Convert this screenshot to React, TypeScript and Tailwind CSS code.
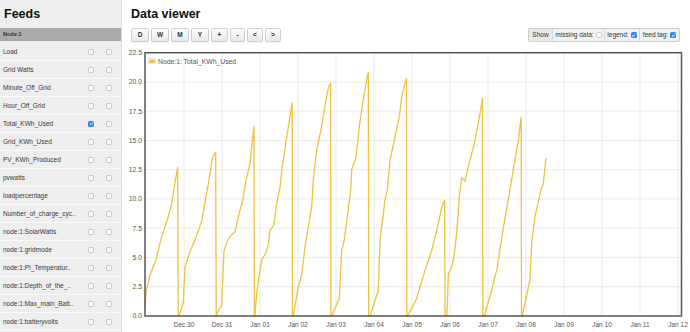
import React from 'react'

const feeds = [
  { name: 'Load' },
  { name: 'Grid Watts' },
  { name: 'Minute_Off_Grid' },
  { name: 'Hour_Off_Grid' },
  { name: 'Total_KWh_Used', left: true },
  { name: 'Grid_KWh_Used' },
  { name: 'PV_KWh_Produced' },
  { name: 'pvwatts' },
  { name: 'loadpercentage' },
  { name: 'Number_of_charge_cyc..' },
  { name: 'node:1:SolarWatts' },
  { name: 'node:1:gridmode' },
  { name: 'node:1:PI_Temperatur..' },
  { name: 'node:1:Depth_of_the_..' },
  { name: 'node:1:Max_main_Batt..' },
  { name: 'node:1:batteryvolts' },
]

const buttons = [
  { label: 'D', w: 'w-[18px]' },
  { label: 'W', w: 'w-[18px]' },
  { label: 'M', w: 'w-[18px]' },
  { label: 'Y', w: 'w-[18px]' },
  { label: '+', w: 'w-[17px]' },
  { label: '-', w: 'w-[15px]' },
  { label: '<', w: 'w-[16px]' },
  { label: '>', w: 'w-[16px]' },
]

// points as [page x, kWh]
const series: [number, number][] = [
  [145, 0.85], [146, 2.0], [150, 3.5], [156, 4.8], [161.7, 6.8], [168, 8.4], [171.7, 9.6], [175, 11.4], [177.7, 12.7], [178.2, 0],
  [180, 0.2], [183.3, 1.2], [185, 4.2], [190, 5.5], [195, 6.5], [201.7, 8.1], [208.3, 11.3], [210, 12.2], [212.7, 13.6], [215.7, 14.0], [216.2, 0],
  [218, 0.4], [221.7, 0.94], [224, 5.6], [228.3, 6.6], [231, 6.9], [235, 7.2], [238.3, 8.5], [242.7, 9.9], [246, 11.6], [250, 13.0], [251.7, 14.5], [254, 16.2], [254.4, 0],
  [255, 0.1], [256.7, 1.9], [260, 3.9], [261.7, 4.8], [266, 5.4], [268.3, 6.1], [270, 7.3], [274, 7.8], [276.7, 9.6], [280, 11.0], [282.3, 12.8], [286.7, 15.3], [292.2, 18.2], [292.5, 0],
  [293.3, 0], [298.3, 2.5], [301.7, 3.5], [305, 5.9], [311.7, 9.3], [313.3, 11.6], [316.7, 14.2], [321.7, 16.2], [326, 18.5], [328.3, 19.5], [330.6, 19.9], [330.9, 0],
  [331.7, 0], [339.3, 1.5], [341.7, 5.6], [344.3, 6.5], [350.7, 10.8], [351.7, 12.5], [356, 13.6], [359.3, 16.2], [363.3, 18.5], [366.7, 20.2], [368.3, 20.8], [368.7, 0],
  [370, 0], [378.3, 2.2], [380, 6.5], [385, 9.9], [387.3, 10.8], [390, 13.3], [395, 15.3], [399.3, 17.0], [401.7, 18.7], [405, 19.9], [406.5, 20.3], [406.8, 0],
  [407.7, 0], [416.7, 1.5], [420, 2.5], [425, 3.9], [431.7, 5.6], [438.3, 7.9], [441.7, 9.3], [444.7, 9.9], [445, 0],
  [446.7, 0], [447.3, 0.8], [448.3, 3.6], [451.7, 4.2], [454, 5.1], [456.7, 7.1], [459.3, 10.2], [461.7, 11.8], [465, 11.5], [466.7, 12.2], [470, 13.3], [475, 15.0], [480, 17.3], [482.5, 18.6], [482.8, 0],
  [484.3, 0], [491.7, 2.2], [495, 3.4], [496.7, 3.9], [503.3, 7.5], [510, 10.8], [513.3, 12.5], [518.3, 15.0], [521.2, 17.0], [521.5, 0],
  [522.3, 0], [530, 3.1], [531.7, 6.2], [535, 8.5], [541, 10.8], [543.3, 11.3], [546, 13.5],
]

const plot = { left: 145, right: 681.5, top: 52.7, bottom: 316 }
const yOf = (v: number) => plot.bottom - (v / 22.5) * (plot.bottom - plot.top)

const days = ['Dec 30', 'Dec 31', 'Jan 01', 'Jan 02', 'Jan 03', 'Jan 04', 'Jan 05', 'Jan 06', 'Jan 07', 'Jan 08', 'Jan 09', 'Jan 10', 'Jan 11', 'Jan 12']
const ticks = [0, 2.5, 5, 7.5, 10, 12.5, 15, 17.5, 20, 22.5]

function Check({ on }: { on?: boolean }) {
  if (on) {
    return (
      <span className="w-[6px] h-[6px] rounded-[1.5px] bg-[#3b87f0] flex items-center justify-center">
        <svg width="5" height="5" viewBox="0 0 10 10">
          <path d="M2 5.2 L4.2 7.3 L8 2.8" fill="none" stroke="#fff" strokeWidth="1.8" />
        </svg>
      </span>
    )
  }
  return <span className="w-[6px] h-[6px] rounded-[1.5px] border border-[#c4c4c4] bg-white" />
}

function Chart() {
  const path = series.map(([x, v], i) => `${i ? 'L' : 'M'}${x} ${yOf(v).toFixed(1)}`).join(' ')
  return (
    <svg width="568" height="290" viewBox="122 42 568 290" className="block">
      {ticks.slice(1, -1).map((t) => (
        <line key={t} x1={plot.left} x2={plot.right} y1={yOf(t)} y2={yOf(t)} stroke="#ebebeb" strokeWidth="1" />
      ))}
      {days.map((d, i) => (
        <line key={d} x1={184 + 38 * i} x2={184 + 38 * i} y1={plot.top} y2={plot.bottom} stroke="#ebebeb" strokeWidth="1" />
      ))}
      <path d={path} fill="none" stroke="#edc240" strokeWidth="1.3" strokeLinejoin="round" />
      <rect x={plot.left} y={plot.top} width={plot.right - plot.left} height={plot.bottom - plot.top} fill="none" stroke="#555" strokeWidth="1.5" />
      {ticks.map((t) => (
        <text key={t} x="142" y={yOf(t) + 2.4} textAnchor="end" fontSize="6.8" fill="#545454" fontFamily="'Liberation Sans', Arial, sans-serif">
          {t.toFixed(1)}
        </text>
      ))}
      {days.map((d, i) => (
        <text key={d} x={184 + 38 * i} y="326.5" textAnchor="middle" fontSize="6.5" fill="#545454" fontFamily="'Liberation Sans', Arial, sans-serif">
          {d}
        </text>
      ))}
      <rect x="148.5" y="58.8" width="7" height="5" fill="#fff" stroke="#ccc" strokeWidth="0.5" />
      <rect x="149.3" y="59.6" width="5.4" height="3.4" fill="#edc240" />
      <text x="158" y="63.6" fontSize="6.8" fill="#545454" fontFamily="'Liberation Sans', Arial, sans-serif">
        Node:1: Total_KWh_Used
      </text>
    </svg>
  )
}

export default function App() {
  return (
    <div className="w-[690px] h-[332px] flex bg-white overflow-hidden text-[#222] font-['Liberation_Sans',Arial,sans-serif]">
      {/* sidebar */}
      <div className="w-[122px] shrink-0 bg-[#eeeeee] border-r border-[#dcdcdc]">
        <div className="h-[28px] flex items-center pl-[4px] text-[12.5px] font-bold text-[#111]">Feeds</div>
        <div className="h-[13px] mb-[2px] bg-[#aaaaaa] flex items-center pl-[3px] text-[5.5px] font-bold text-[#333]">Node:1</div>
        {feeds.map((f) => (
          <div key={f.name} className="h-[18px] flex items-center pl-[3px] pr-[9px] border-b border-[#f9f9f9] text-[6.5px] text-[#3a3a3a]">
            <span className="flex-1 whitespace-nowrap">{f.name}</span>
            <span className="flex gap-[12px]">
              <Check on={f.left} />
              <Check />
            </span>
          </div>
        ))}
      </div>

      {/* main */}
      <div className="flex-1 flex flex-col">
        <div className="h-[28px] flex items-center pl-[9px] text-[12.5px] font-bold text-[#111]">Data viewer</div>
        <div className="h-[14px] flex items-center justify-between pl-[9px] pr-[10px]">
          <div className="flex gap-[2px]">
            {buttons.map((b) => (
              <span
                key={b.label}
                className={`${b.w} h-[14px] flex items-center justify-center rounded-[2px] border border-[#cfcfcf] bg-gradient-to-b from-white to-[#e8e8e8] text-[6.5px] font-bold text-[#333] shadow-[0_0.5px_0.5px_rgba(0,0,0,0.08)]`}
              >
                {b.label}
              </span>
            ))}
          </div>
          <div className="h-[14px] flex items-stretch rounded-[2px] border border-[#cfcfcf] bg-[#f3f3f3] text-[6.5px] text-[#333]">
            <span className="w-[23px] flex items-center justify-center bg-[#eaeaea]">Show</span>
            <span className="w-[52px] flex items-center justify-center gap-[2px] border-l border-[#d6d6d6]">
              missing data:
              <Check />
            </span>
            <span className="w-[35px] flex items-center justify-center gap-[2px] border-l border-[#d6d6d6]">
              legend:
              <Check on />
            </span>
            <span className="w-[40px] flex items-center justify-center gap-[2px] border-l border-[#d6d6d6]">
              feed tag:
              <Check on />
            </span>
          </div>
        </div>
        <Chart />
      </div>
    </div>
  )
}
